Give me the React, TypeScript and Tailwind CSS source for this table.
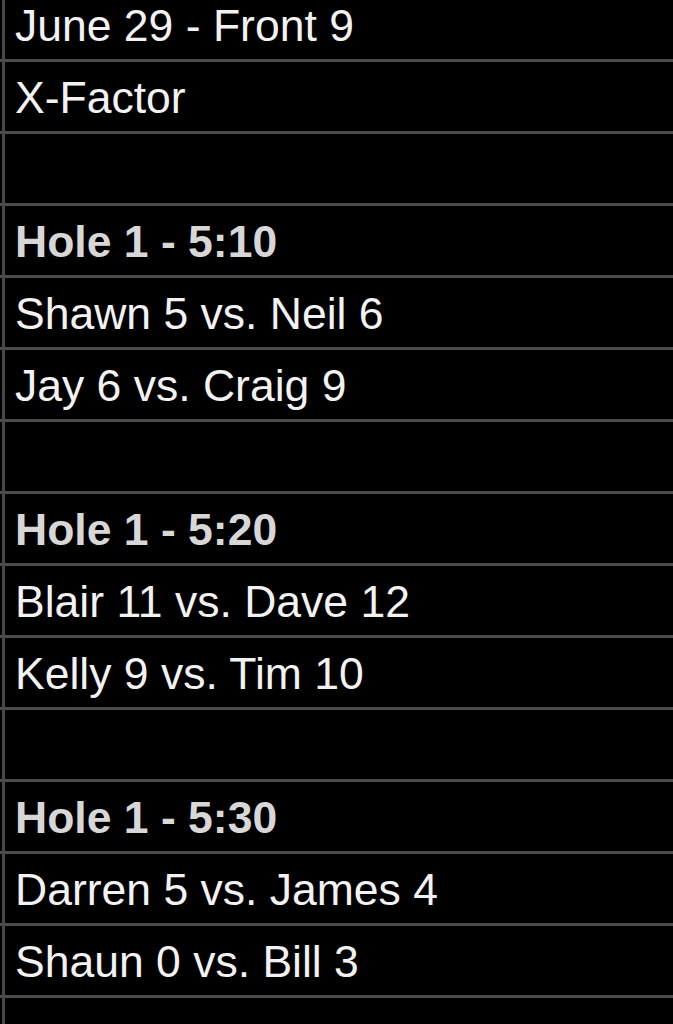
import React from "react";

type Row = { text: string; bold?: boolean };

const rows: Row[] = [
  { text: "June 29 - Front 9" },
  { text: "X-Factor" },
  { text: "" },
  { text: "Hole 1 - 5:10", bold: true },
  { text: "Shawn 5 vs. Neil 6" },
  { text: "Jay 6 vs. Craig 9" },
  { text: "" },
  { text: "Hole 1 - 5:20", bold: true },
  { text: "Blair 11 vs. Dave 12" },
  { text: "Kelly 9 vs. Tim 10" },
  { text: "" },
  { text: "Hole 1 - 5:30", bold: true },
  { text: "Darren 5 vs. James 4" },
  { text: "Shaun 0 vs. Bill 3" },
  { text: "" },
];

export default function App() {
  return (
    <div
      className="w-[673px] h-[1024px] overflow-hidden bg-black"
      style={{ fontFamily: '"Liberation Sans", Arial, sans-serif' }}
    >
      <div className="mt-[-10px] flex flex-col">
        {rows.map((r, i) => (
          <div
            key={i}
            className="h-[72px] shrink-0 flex border-b-[3px] border-[#4b4b4b]"
          >
            <div className="w-[2px] shrink-0" />
            <div className="flex-1 flex items-center border-l-[3px] border-[#474747] pl-[10px] pt-[3px]">
              <span
                className={
                  r.bold
                    ? "text-[44.5px] leading-none font-bold text-[#d7d7d7] whitespace-nowrap"
                    : "text-[44.5px] leading-none text-[#f2f2f2] whitespace-nowrap"
                }
              >
                {r.text}
              </span>
            </div>
          </div>
        ))}
      </div>
    </div>
  );
}
